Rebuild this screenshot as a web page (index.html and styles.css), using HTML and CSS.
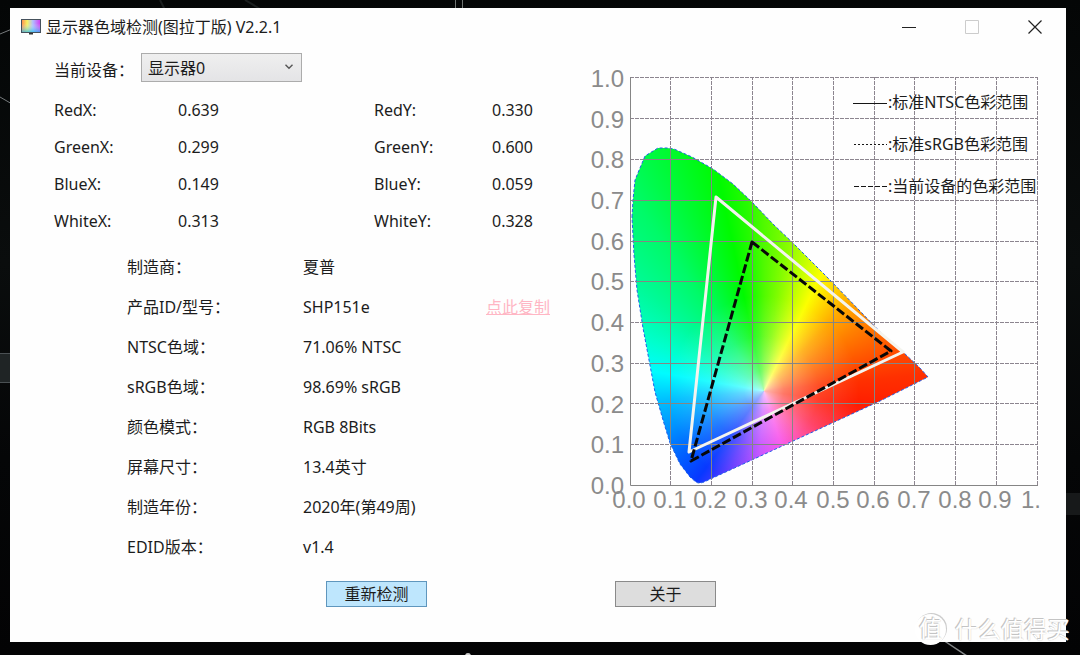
FILE: index.html
```html
<!DOCTYPE html>
<html lang="zh-CN">
<head>
<meta charset="utf-8">
<meta name="viewport" content="width=device-width, initial-scale=1">
<title>显示器色域检测(图拉丁版) V2.2.1</title>
<link rel="stylesheet" href="styles.css">
</head>
<body>
<svg class="wallpaper" viewBox="0 0 1080 655" preserveAspectRatio="none" aria-hidden="true">
  <rect x="0" y="353" width="12" height="30" fill="#1f2425"/>
  <path d="M0 353.500H12M0 382.500H12" stroke="#4a5053"/>
  <path d="M0 97L12 104M0 34L12 29" stroke="#777b7d"/>
  <path d="M455.500 0V10M462.500 0V10" stroke="#6f7472"/>
  <path d="M160 0L165 10M245 0L262 10" stroke="#1a1e1e" stroke-width="2"/>
  <path d="M1064 493H1080V515H1064Z" fill="#17191a"/>
  <path d="M940 638L967 656" stroke="#85888a" stroke-width="1.500"/>
  <circle cx="468" cy="656" r="3" fill="#d0d0d0"/>
</svg>

<div class="window">
  <header class="titlebar">
    <svg class="app-icon" width="20" height="17" viewBox="0 0 20 17" aria-hidden="true">
      <defs>
        <linearGradient id="screen"><stop offset="0" stop-color="#ff7a3c"/><stop offset=".3" stop-color="#f6f050"/><stop offset=".6" stop-color="#a8b8ff"/><stop offset="1" stop-color="#d020f0"/></linearGradient>
        <linearGradient id="shade" x2="0" y2="1"><stop offset=".3" stop-color="#fff" stop-opacity=".1"/><stop offset="1" stop-color="#18b8f0" stop-opacity=".75"/></linearGradient>
      </defs>
      <rect x=".5" y=".5" width="19" height="13" fill="url(#screen)"/>
      <rect x=".5" y=".5" width="19" height="13" fill="url(#shade)" stroke="#45515c"/>
      <path d="M8 14h4v1.500h-4z" fill="#333"/>
    </svg>
    <h1 class="title">显示器色域检测(图拉丁版) V2.2.1</h1>
    <button class="caption" type="button" aria-label="最小化"><svg width="14" height="14" viewBox="0 0 14 14"><path d="M0 7.500H14" stroke="#222"/></svg></button>
    <button class="caption" type="button" aria-label="最大化" disabled><svg width="14" height="14" viewBox="0 0 14 14"><path d="M.5 .5H13.500V13.500H.5Z" fill="none" stroke="#ccc"/></svg></button>
    <button class="caption" type="button" aria-label="关闭"><svg width="14" height="14" viewBox="0 0 14 14"><path d="M.5 .5L13.500 13.500M13.500 .5L.5 13.500" stroke="#222" stroke-width="1.200"/></svg></button>
  </header>

  <main class="content">
    <section class="info">
      <div class="device">
        <label for="device">当前设备：</label>
        <span class="picker">
          <select id="device"><option>显示器0</option></select>
          <svg class="chevron" width="8" height="6" viewBox="0 0 8 6" aria-hidden="true"><path d="M.5 .8L4 4.300L7.500 .8" fill="none" stroke="#555" stroke-width="1.400"/></svg>
        </span>
      </div>

      <table class="primaries">
        <tr><th>RedX:</th><td>0.639</td><th>RedY:</th><td>0.330</td></tr>
        <tr><th>GreenX:</th><td>0.299</td><th>GreenY:</th><td>0.600</td></tr>
        <tr><th>BlueX:</th><td>0.149</td><th>BlueY:</th><td>0.059</td></tr>
        <tr><th>WhiteX:</th><td>0.313</td><th>WhiteY:</th><td>0.328</td></tr>
      </table>

      <table class="details">
        <tr><th>制造商：</th><td>夏普</td><td></td></tr>
        <tr><th>产品ID/型号：</th><td>SHP151e</td><td><a class="copy" href="#copy">点此复制</a></td></tr>
        <tr><th>NTSC色域：</th><td>71.06% NTSC</td><td></td></tr>
        <tr><th>sRGB色域：</th><td>98.69% sRGB</td><td></td></tr>
        <tr><th>颜色模式：</th><td>RGB 8Bits</td><td></td></tr>
        <tr><th>屏幕尺寸：</th><td>13.4英寸</td><td></td></tr>
        <tr><th>制造年份：</th><td>2020年(第49周)</td><td></td></tr>
        <tr><th>EDID版本：</th><td>v1.4</td><td></td></tr>
      </table>
    </section>

    <svg class="chart" viewBox="-45 -423 460 450" role="img" aria-label="CIE 1931 色度图">
      <defs>
        <clipPath id="locus"><path id="locus-shape" d="M2 -268L3 -285L5 -305L15 -329L28 -337H37L44 -336L62 -328L83 -316L103 -301L122 -283L144 -260L163 -242L202 -203L230 -174L254 -149L273 -133L290 -117L298 -108L250 -84L200 -61L74 -3Q69 -1 66 -3L60 -8L50 -21L40 -42L33 -65L25 -93L19 -125L13 -157L7 -195L4 -230Z"/></clipPath>
      </defs>
      <foreignObject x="0" y="-340" width="300" height="340" clip-path="url(#locus)"><div class="spectrum"></div></foreignObject>
      <use class="locus-edge" href="#locus-shape"/>

      <g class="grid">
        <path d="M0 -40.500H408M0 -81.500H408M0 -121.500H408M0 -162.500H408M0 -203.500H408M0 -243.500H408M0 -284.500H408M0 -325.500H408M0 -366.500H408M0 -407.500H408"/>
        <path d="M40.500 0V-408M81.500 0V-408M122.500 0V-408M162.500 0V-408M203.500 0V-408M244.500 0V-408M284.500 0V-408M325.500 0V-408M366.500 0V-408M407.500 0V-408"/>
      </g>
      <path class="grid-inside" clip-path="url(#locus)" d="M0 -40.500H408M0 -81.500H408M0 -121.500H408M0 -162.500H408M0 -203.500H408M0 -243.500H408M0 -284.500H408M0 -325.500H408M40.500 0V-408M81.500 0V-408M122.500 0V-408M162.500 0V-408M203.500 0V-408M244.500 0V-408M284.500 0V-408"/>
      <path class="axis" d="M.5 -408V.5H408"/>

      <path class="ntsc" d="M86 -288L273 -133L59 -33Z"/>
      <path class="device-gamut" d="M122 -243L261 -134L61 -24Z"/>

      <g class="ticks ticks-y">
        <text x="-6" y="9">0.0</text><text x="-6" y="-32">0.1</text><text x="-6" y="-72">0.2</text><text x="-6" y="-113">0.3</text><text x="-6" y="-154">0.4</text><text x="-6" y="-195">0.5</text><text x="-6" y="-235">0.6</text><text x="-6" y="-276">0.7</text><text x="-6" y="-317">0.8</text><text x="-6" y="-357">0.9</text><text x="-6" y="-398">1.0</text>
      </g>
      <g class="ticks ticks-x">
        <text x="-1" y="23">0.0</text><text x="40" y="23">0.1</text><text x="80" y="23">0.2</text><text x="121" y="23">0.3</text><text x="161" y="23">0.4</text><text x="203" y="23">0.5</text><text x="243" y="23">0.6</text><text x="284" y="23">0.7</text><text x="325" y="23">0.8</text><text x="365" y="23">0.9</text><text x="401" y="23">1.</text>
      </g>

      <g class="legend">
        <path d="M223 -381.500H257"/>
        <path d="M224 -340.500H257" stroke-dasharray="2 2"/>
        <path d="M224 -298.500H257" stroke-dasharray="5 2"/>
        <text x="258" y="-377">:标准NTSC色彩范围</text>
        <text x="258" y="-335">:标准sRGB色彩范围</text>
        <text x="258" y="-293">:当前设备的色彩范围</text>
      </g>
    </svg>
  </main>

  <footer class="actions">
    <button class="action primary" type="button">重新检测</button>
    <button class="action" type="button">关于</button>
  </footer>
</div>

<div class="watermark"><span class="seal">值</span><span>什么值得买</span></div>
</body>
</html>
```

FILE: styles.css
```css
* { box-sizing: border-box; }

body {
  position: relative;
  min-height: 100vh;
  margin: 0;
  padding: 8px 14px 13px 10px;
  background: linear-gradient(#040606, #0a0d0d 40%, #050607 70%, #030304);
  color: #1c1c1c;
  font: 16px/24px "Noto Sans", "Noto Sans CJK SC", sans-serif;
  overflow: hidden;
}

.wallpaper {
  position: absolute;
  inset: 0;
  width: 100%;
  height: 100%;
}

.window {
  position: relative;
  background: #fefefe;
}

.titlebar {
  display: flex;
  align-items: center;
  height: 38px;
  padding-left: 11px;
}

.title {
  flex: 1;
  margin: 0 0 0 5px;
  font-size: 16px;
  font-weight: 400;
}

.caption {
  display: flex;
  align-items: center;
  justify-content: center;
  width: 63px;
  height: 38px;
  padding: 0;
  border: 0;
  background: none;
}

.content {
  display: grid;
  grid-template-columns: minmax(0, 1fr) 460px;
  padding-right: 21px;
}

.device {
  display: flex;
  align-items: center;
  padding: 7px 0 0 44px;
}

.device label {
  width: 87px;
  padding-top: 5px;
  white-space: nowrap;
}

.picker {
  position: relative;
  width: 161px;
}

.picker select {
  display: block;
  width: 100%;
  height: 29px;
  padding: 0 24px 0 6px;
  appearance: none;
  border: 1px solid #acacac;
  border-radius: 0;
  background: linear-gradient(#efefef, #e4e4e6);
  color: inherit;
  font: inherit;
}

.chevron {
  position: absolute;
  top: 11px;
  right: 9px;
  pointer-events: none;
}

table {
  border-collapse: collapse;
  table-layout: fixed;
}

th,
td {
  padding: 0;
  font-weight: 400;
  text-align: left;
  white-space: nowrap;
}

.primaries { margin: 9px 0 0 44px; }
.primaries tr { height: 37px; }
.primaries th:first-child { width: 124px; }
.primaries td:nth-child(2) { width: 196px; }
.primaries th:nth-child(3) { width: 118px; }

.details { margin: 8px 0 0 117px; }
.details tr { height: 40px; }
.details th { width: 176px; }
.details td:nth-child(2) { width: 183px; }

.copy { color: #ffb6c4; }

.chart {
  display: block;
  width: 100%;
  margin-top: 16px;
}

/* Hue turns around the white point, which fades out from the centre. */
.spectrum {
  width: 300px;
  height: 340px;
  background:
    radial-gradient(circle at 134px 246px, rgba(255, 255, 255, .7) 0, rgba(255, 255, 255, .4) 20px, rgba(255, 255, 255, .15) 55px, transparent 95px),
    conic-gradient(from 0deg at 134px 246px,
      #50fa00 0deg, #80fc00 8deg, #b8ff00 16deg, #fcff00 26deg, #ffe000 32deg,
      #ffa800 44deg, #ff8000 56deg, #ff5800 70deg, #ff3000 84deg, #ff1c00 98deg,
      #ff2850 124deg, #ff3898 142deg, #f840e8 162deg, #c040ff 184deg,
      #6038ff 203deg, #0838ff 217deg, #0060ff 232deg, #0090ff 248deg,
      #00c0ff 265deg, #00fcff 280deg, #00ffcc 294deg, #00fa98 310deg,
      #00fa68 326deg, #00fa30 338deg, #00fa00 348deg, #28fa00 355deg, #50fa00 360deg);
}

.locus-edge {
  fill: none;
  stroke: #2060e8;
  stroke-dasharray: 3 2;
}

.grid path {
  fill: none;
  stroke: #8c858f;
  stroke-dasharray: 4 1;
}

.grid-inside,
.axis {
  fill: none;
  stroke: #858585;
}

.ntsc,
.device-gamut {
  fill: none;
  stroke-width: 3;
  stroke-linejoin: round;
}

.ntsc { stroke: #f4f4ee; }

.device-gamut {
  stroke: #080808;
  stroke-dasharray: 9 3;
}

.ticks {
  fill: #8b8b8b;
  font: 24px "Liberation Sans", Arial, sans-serif;
}

.ticks-y { text-anchor: end; }
.ticks-x { text-anchor: middle; }

.legend path { stroke: #151515; }
.legend text { fill: #1c1c1c; }

.actions {
  display: flex;
  gap: 188px;
  padding: 14px 0 35px 316px;
}

.action {
  width: 101px;
  height: 26px;
  padding: 0;
  border: 1px solid #8a8a8a;
  background: #dddddd;
  color: inherit;
  font: inherit;
  line-height: 24px;
}

.action.primary {
  border-color: #5f96bd;
  background: #bee6fd;
}

.watermark {
  position: absolute;
  right: 10px;
  bottom: 9px;
  display: flex;
  align-items: center;
  gap: 9px;
  color: #fff;
  font-size: 23px;
  line-height: 34px;
  text-shadow: -1px -1px 0 #c4c4c4, 0 0 1px #bbb;
}

.seal {
  width: 31px;
  height: 31px;
  border-radius: 50%;
  background: #fff;
  box-shadow: 1px -1px 0 #ccc;
  font-size: 23px;
  line-height: 29px;
  text-align: center;
}
```
